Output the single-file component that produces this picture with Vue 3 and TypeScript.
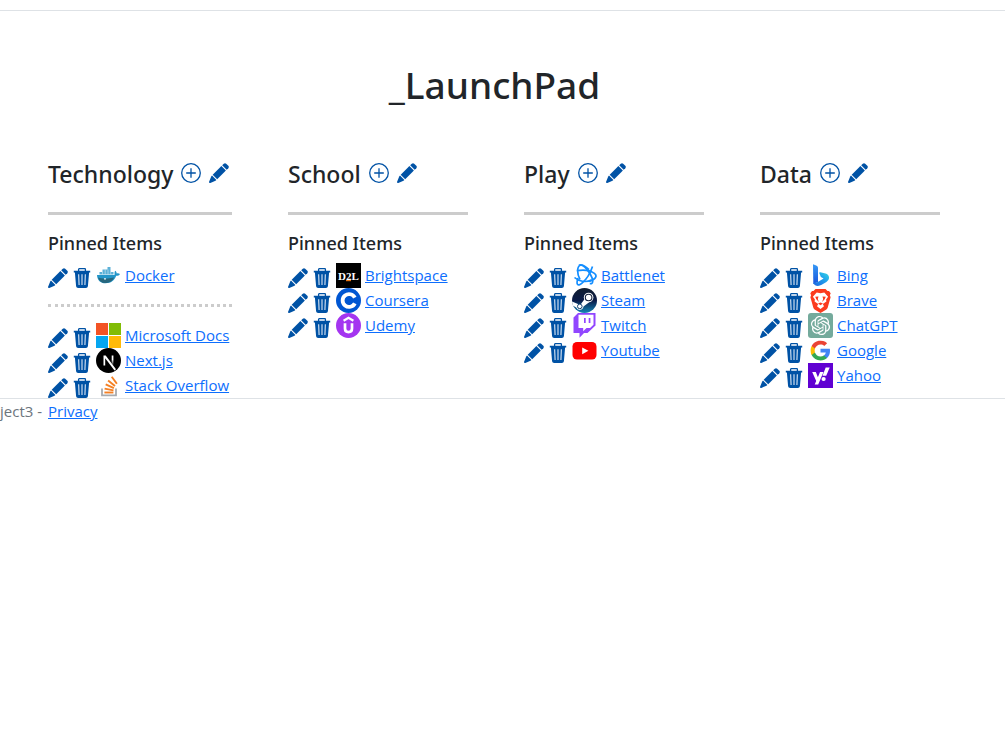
<script setup lang="ts">
interface Item {
  name: string
  logo: string
}

interface Category {
  title: string
  pinned: Item[]
  others: Item[]
}

const logos: Record<string, string> = {
  docker: `<g fill="#2396c9"><path d="M1 12h17.5c.3-1.600-.300-3 .7-4.300 1 .8 1.500 1.700 1.500 2.800 1.200-.300 2.300-.200 3.200.4-.6 1.400-1.900 1.900-3.700 1.900C18.300 17.600 15 20.300 9.500 20.300 4.500 20.300 1.300 17.500 1 12z" /><path d="M3.500 9h14v2.500h-14zM6.500 6.500h8V9h-8zM11.500 4h3v2.500h-3z" opacity=".75"/></g><path d="M2 14.500c4 1.500 10 1.500 16 0-1.500 4-5 5.500-9 5.500-3.500 0-6-2-7-5.500z" fill="#27677e"/><path d="M6.500 9v2.500M9.200 6.500v5M12 6.500v5M14.700 9v2.500" stroke="#d5edf4" stroke-width=".6"/><circle cx="9" cy="15.800" r=".9" fill="#fff"/>`,
  microsoft: `<path fill="#f35325" d="M0 0h12v12H0z"/><path fill="#81bc06" d="M13 0h12v12H13z"/><path fill="#05a6f0" d="M0 13h12v12H0z"/><path fill="#ffba08" d="M13 13h12v12H13z"/>`,
  next: `<defs><linearGradient id="nextFade" x1="0" y1="0" x2="0" y2="1"><stop offset=".4" stop-color="#fff"/><stop offset="1" stop-color="#fff" stop-opacity="0"/></linearGradient></defs><circle cx="12.500" cy="12.500" r="12.500"/><path d="M7.500 7.500h2.200L20 21.200l-1.500 1.200L9.200 10.200v7.300H7.500z" fill="#fff"/><path d="M15.700 7.500h1.700v10h-1.700z" fill="url(#nextFade)"/>`,
  stack: `<path d="M6 15.500v6.800h14v-6.800" fill="none" stroke="#a7abb0" stroke-width="1.800"/><g stroke="#f48024" stroke-width="1.900"><path d="M8.400 19.500h9"/><path d="m8.600 15.600 8.900 1.800"/><path d="m9.700 11.400 8.200 3.800"/><path d="m12.100 7.400 6.900 5.700"/><path d="m15.700 3.700 5.200 7.100"/></g>`,
  d2l: `<path d="M0 0h25v25H0z"/><text x="12.500" y="16.500" text-anchor="middle" font-family="Liberation Serif, serif" font-weight="700" font-size="11" fill="#fff">D2L</text><path d="M10 17h5v1.200h-5z" fill="#e87511"/>`,
  coursera: `<circle cx="12.500" cy="12.500" r="12.500" fill="#0056d2"/><path d="M18.800 9.700a6.400 6.400 0 1 0 0 5.600" fill="none" stroke="#fff" stroke-width="3.800"/>`,
  udemy: `<circle cx="12.500" cy="12.500" r="12.500" fill="#a435f0"/><path d="m7.600 7.700 4.900-2.900 4.900 2.900" fill="none" stroke="#fff" stroke-width="2.200"/><path d="M9 10.200v5.400c0 4.700 7 4.700 7 0v-5.400" fill="none" stroke="#fff" stroke-width="2.700"/>`,
  battlenet: `<g fill="none" stroke="#148eff" stroke-width="1.700"><path d="M7 2.300c3-2 8 3.200 11.200 8.700 3.600 6.200 3.200 10.500-.4 9.500"/><path d="M8 16.500C4.800 11 4.800 3.500 8.300 2.200c2.200-.8 5.700 1.500 8.700 4.400"/><path d="M4.800 7.700c7-1.200 14 .1 17.600 2.700 3.500 2.700.9 6.200-5.400 8"/><path d="M20.500 3.400c-1.800 5.500-6 12.800-10.500 16.800C5.500 24.200 3.900 21 6 15"/><path d="M2.500 14.500c4 3.700 11.200 5.400 17 2.500"/></g>`,
  steam: `<defs><linearGradient id="steamFill" x1="0" y1="0" x2="0" y2="1"><stop stop-color="#111d2e"/><stop offset=".5" stop-color="#0a1b48"/><stop offset="1" stop-color="#1387b8"/></linearGradient></defs><circle cx="12.500" cy="12.500" r="12.500" fill="url(#steamFill)"/><path d="m0 13.500 6.500 2.700 2.500-.2 4-5.500 4.500 3.500-6 4.500a3.800 3.800 0 0 1-7.300 1L.7 17.500z" fill="#fff"/><circle cx="16.600" cy="9.500" r="4.800" fill="#fff"/><circle cx="16.600" cy="9.500" r="3.300" fill="#fff" stroke="#14213c" stroke-width="1.100"/><circle cx="7.800" cy="18.400" r="2.300" fill="#fff" stroke="#12406e" stroke-width="1"/>`,
  twitch: `<path d="M1.500 4.500 6 0h17.500v12.500L15.500 20H12l-4.500 4.800V20h-6z" fill="#9146ff"/><path d="M6.500 1.700h15v10L18 15h-3.500l-3.300 3.200V15H6.500z" fill="#fff"/><path d="M12 5h1.700v5H12zM16.700 5h1.700v5h-1.700z" fill="#9146ff"/>`,
  youtube: `<rect x=".5" y="4" width="24" height="17.500" rx="4.500" fill="#f00"/><path d="m10.200 9.400 6.200 3.400-6.200 3.400z" fill="#fff"/>`,
  bing: `<defs><linearGradient id="bingStem" x1="0" y1="0" x2="0" y2="1"><stop stop-color="#3699f5"/><stop offset="1" stop-color="#1854dc"/></linearGradient><linearGradient id="bingBowl" x1="0" y1="1" x2="1" y2="0"><stop stop-color="#1e63de"/><stop offset=".6" stop-color="#20a5ed"/><stop offset="1" stop-color="#38d8df"/></linearGradient></defs><path d="M5 1.200 8.200 2.400c1.300.5 1.800 1.200 1.800 2.600v14L5.300 21z" fill="url(#bingStem)"/><path d="M12.300 9.200c-.8-.2-1.300.5-.9 1.200l1.500 3.500 2.700 1.500-5.800 3.500L5.200 20c1.600 3.400 5.500 3.600 8.500 1.800l4.700-2.800c4-2.500 3.300-7.200-.8-8.400z" fill="url(#bingBowl)"/>`,
  brave: `<path d="M7.500 1h10l2 2 1.500-.1 1.700 2.300-.8 2 .7 2-2.800 10c-.4 1.400-1 2-2.200 2.800L12.500 25l-5.100-3c-1.200-.8-1.800-1.400-2.200-2.800l-2.800-10 .7-2-.8-2L4 2.900l1.500.1z" fill="#fb3b1e"/><path d="m8.700 4.500 3.800.7 3.800-.7 3.800 4.300-2 2.800.3 2-3.600 2.500 1.200 2.200-3.500 2.700L9 18.300l1.200-2.200L6.600 13.600l.3-2-2-2.800z" fill="#fff"/><path d="m7.200 8.700 3.300-.2-.7 2.500 1.100 3.100-2.600-2.800zm10.600 0-3.300-.2.700 2.500-1.100 3.100 2.600-2.800zM10 15.500l2.500-1 2.500 1-2.500 1.700z" fill="#fb3b1e"/>`,
  chatgpt: `<rect width="25" height="25" rx="3" fill="#74aa9c"/><g transform="translate(2.900 2.900) scale(.8)" fill="#fff"><path d="M22.282 9.821a5.985 5.985 0 0 0-.516-4.910 6.046 6.046 0 0 0-6.510-2.900A6.065 6.065 0 0 0 4.981 4.182a5.985 5.985 0 0 0-3.998 2.900 6.046 6.046 0 0 0 .743 7.097 5.980 5.980 0 0 0 .510 4.911 6.051 6.051 0 0 0 6.515 2.900A5.985 5.985 0 0 0 13.260 24a6.056 6.056 0 0 0 5.772-4.206 5.990 5.990 0 0 0 3.998-2.900 6.056 6.056 0 0 0-.748-7.073zm-9.022 12.609a4.476 4.476 0 0 1-2.876-1.041l.142-.080 4.778-2.758a.795.795 0 0 0 .393-.681v-6.737l2.020 1.169a.071.071 0 0 1 .038.052v5.583a4.504 4.504 0 0 1-4.495 4.494zM3.600 18.304a4.471 4.471 0 0 1-.535-3.014l.142.085 4.783 2.759a.771.771 0 0 0 .780 0l5.843-3.369v2.332a.080.080 0 0 1-.033.062L9.740 19.950a4.499 4.499 0 0 1-6.140-1.646zM2.341 7.896a4.485 4.485 0 0 1 2.366-1.973V11.600a.766.766 0 0 0 .388.677l5.815 3.354-2.020 1.169a.076.076 0 0 1-.071 0l-4.830-2.787A4.504 4.504 0 0 1 2.341 7.872zm16.597 3.856-5.833-3.388L15.119 7.200a.076.076 0 0 1 .071 0l4.830 2.791a4.494 4.494 0 0 1-.676 8.105v-5.678a.790.790 0 0 0-.407-.667zm2.011-3.023-.142-.085-4.774-2.782a.776.776 0 0 0-.785 0L9.409 9.230V6.897a.066.066 0 0 1 .028-.062l4.830-2.787a4.499 4.499 0 0 1 6.680 4.660zM8.307 12.863l-2.020-1.164a.080.080 0 0 1-.038-.057V6.074a4.499 4.499 0 0 1 7.375-3.453l-.142.080L8.704 5.460a.795.795 0 0 0-.393.681zm1.097-2.366 2.602-1.500 2.607 1.500v2.999l-2.597 1.500-2.607-1.500z"/></g>`,
  google: `<g transform="translate(1.700 1.700) scale(.9)"><path fill="#4285f4" d="M22.560 12.250c0-.780-.070-1.530-.200-2.250H12v4.260h5.920a5.060 5.060 0 0 1-2.200 3.320v2.770h3.570c2.080-1.920 3.270-4.740 3.270-8.100z"/><path fill="#34a853" d="M12 23c2.970 0 5.460-.980 7.280-2.660l-3.570-2.770c-.980.660-2.230 1.060-3.710 1.060-2.860 0-5.290-1.930-6.160-4.530H2.180v2.840A11 11 0 0 0 12 23z"/><path fill="#fbbc05" d="M5.840 14.100a6.600 6.600 0 0 1 0-4.200V7.060H2.180a11 11 0 0 0 0 9.880z"/><path fill="#ea4335" d="M12 5.380c1.620 0 3.060.560 4.210 1.640l3.150-3.150A11 11 0 0 0 2.180 7.060L5.840 9.900C6.710 7.310 9.140 5.380 12 5.380z"/></g>`,
  yahoo: `<path d="M0 0h25v25H0z" fill="#6001d2"/><g fill="#fff"><path d="M4.200 9h3.600l2.100 5.200L12 9h3.500l-5.300 12.500H6.700l1.500-3.400z"/><path d="M17.700 4.500h4l-3.500 8.300h-3.700z"/><circle cx="15.600" cy="16" r="2.100"/></g>`,
}

const categories: Category[] = [
  {
    title: 'Technology',
    pinned: [{ name: 'Docker', logo: 'docker' }],
    others: [
      { name: 'Microsoft Docs', logo: 'microsoft' },
      { name: 'Next.js', logo: 'next' },
      { name: 'Stack Overflow', logo: 'stack' },
    ],
  },
  {
    title: 'School',
    pinned: [
      { name: 'Brightspace', logo: 'd2l' },
      { name: 'Coursera', logo: 'coursera' },
      { name: 'Udemy', logo: 'udemy' },
    ],
    others: [],
  },
  {
    title: 'Play',
    pinned: [
      { name: 'Battlenet', logo: 'battlenet' },
      { name: 'Steam', logo: 'steam' },
      { name: 'Twitch', logo: 'twitch' },
      { name: 'Youtube', logo: 'youtube' },
    ],
    others: [],
  },
  {
    title: 'Data',
    pinned: [
      { name: 'Bing', logo: 'bing' },
      { name: 'Brave', logo: 'brave' },
      { name: 'ChatGPT', logo: 'chatgpt' },
      { name: 'Google', logo: 'google' },
      { name: 'Yahoo', logo: 'yahoo' },
    ],
    others: [],
  },
]

const groupsOf = (category: Category): Item[][] =>
  [category.pinned, category.others].filter((group) => group.length > 0)
</script>

<template>
  <div class="page">
    <svg class="symbols" aria-hidden="true">
      <symbol id="pencil" viewBox="0 0 20 20">
        <path d="M14.800.7q1.200-1 2.400 0l2.100 2.100q1 1.200 0 2.400L17.700 6.800 13.200 2.300z" />
        <path d="M12.400 3.100 16.900 7.600 8.200 16.300 3.700 11.800z" />
        <path d="m3 12.600 4.400 4.400-.9.800-5.200 2.100q-1.500.4-1.200-1.100l2.100-5.400z" />
      </symbol>
      <symbol id="trash" viewBox="0 0 20 20">
        <path d="M6.600 3V1.300q0-.6.600-.6h5.600q.6 0 .6.600V3" fill="none" stroke="currentColor" stroke-width="1.300" />
        <path d="M1.800 2.800h16.400v1.800h-1.100l-1.200 13.600q-.2 1.800-2 1.800H6.100q-1.800 0-2-1.800L2.900 4.600H1.800z" />
        <path d="m6.600 6.300.5 10.700M10 6.300V17M13.400 6.300 12.900 17" fill="none" stroke="#bcd2e9" stroke-width="1.300" />
      </symbol>
      <symbol id="plus" viewBox="0 0 20 20">
        <path
          d="M10 5.200v9.600M5.200 10h9.600M19.300 10A9.300 9.300 0 1 1 .7 10a9.300 9.300 0 0 1 18.600 0z"
          fill="none"
          stroke="currentColor"
          stroke-width="1.300"
        />
      </symbol>
    </svg>

    <header class="topbar"></header>

    <main>
      <h1>_LaunchPad</h1>
      <div class="columns">
        <section v-for="category in categories" :key="category.title">
          <div class="heading">
            <h2>{{ category.title }}</h2>
            <button type="button" :aria-label="`Add to ${category.title}`">
              <svg><use href="#plus" /></svg>
            </button>
            <button type="button" :aria-label="`Edit ${category.title}`">
              <svg><use href="#pencil" /></svg>
            </button>
          </div>
          <hr />
          <h3>Pinned Items</h3>
          <template v-for="(group, index) in groupsOf(category)" :key="index">
            <hr v-if="index > 0" class="dotted" />
            <ul>
              <li v-for="item in group" :key="item.name">
                <button type="button" :aria-label="`Edit ${item.name}`">
                  <svg><use href="#pencil" /></svg>
                </button>
                <button type="button" :aria-label="`Delete ${item.name}`">
                  <svg><use href="#trash" /></svg>
                </button>
                <svg class="logo" viewBox="0 0 25 25" aria-hidden="true" v-html="logos[item.logo]"></svg>
                <a href="#">{{ item.name }}</a>
              </li>
            </ul>
          </template>
        </section>
      </div>
    </main>

    <footer><span>ject3 -</span><a href="#">Privacy</a></footer>
  </div>
</template>

<style>
body {
  background: #fff;
}
</style>

<style scoped>
.page {
  color: #212529;
  font: 400 15px/24px "Segoe UI", "Open Sans", "Noto Sans", sans-serif;
}
.symbols {
  position: absolute;
  width: 0;
  height: 0;
}
.topbar {
  height: 10px;
  border-bottom: 1px solid #dee2e6;
}
h1,
h2,
h3 {
  margin: 0;
  font-family: "Segoe UI", "Noto Sans", "Open Sans", sans-serif;
  font-weight: 500;
}
h1 {
  padding: 48px 16px 48px 0;
  font-size: 37px;
  line-height: 52px;
  text-align: center;
}
.columns {
  display: grid;
  grid-template-columns: 184fr 180fr 180fr 180fr;
  gap: 56px;
  padding: 0 65px 0 48px;
}
.heading {
  display: flex;
  align-items: center;
  gap: 8px;
  height: 28px;
}
h2 {
  font-size: 23px;
  line-height: 28px;
  padding-top: 2px;
}
h3 {
  font-size: 18px;
  line-height: 24px;
  margin-bottom: 8px;
}
button {
  flex: none;
  width: 20px;
  height: 20px;
  padding: 0;
  border: 0;
  background: none;
  color: #0052a5;
  cursor: pointer;
}
button svg {
  display: block;
  width: 20px;
  height: 20px;
  fill: currentColor;
}
hr {
  margin: 25px 0 16px;
  border: 0;
  border-top: 3px solid #ccc;
}
hr.dotted {
  margin: 16px 0;
  border-top-style: dotted;
}
ul {
  margin: 0;
  padding: 0;
  list-style: none;
}
li {
  display: flex;
  align-items: center;
  gap: 4px;
  height: 25px;
  white-space: nowrap;
}
li button {
  margin-top: 4px;
}
li a {
  padding-bottom: 1px;
}
.logo {
  flex: none;
  width: 25px;
  height: 25px;
}
a {
  color: #0d6efd;
  text-decoration: underline;
}
footer {
  display: flex;
  border-top: 1px solid #dee2e6;
  color: #6c757d;
}
footer span {
  min-width: 48px;
}
</style>
